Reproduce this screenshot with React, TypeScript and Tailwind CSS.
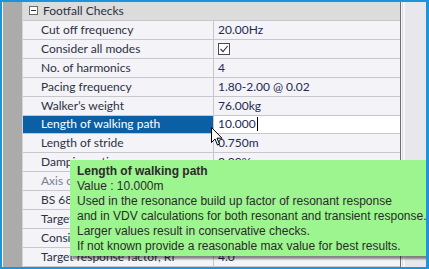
import React from "react";

type Row = {
  label: string;
  value?: string;
  check?: boolean;
  selected?: boolean;
  disabled?: boolean;
};

const rows: Row[] = [
  { label: "Cut off frequency", value: "20.00Hz" },
  { label: "Consider all modes", check: true },
  { label: "No. of harmonics", value: "4" },
  { label: "Pacing frequency", value: "1.80-2.00 @ 0.02" },
  { label: "Walker\u2019s weight", value: "76.00kg" },
  { label: "Length of walking path", value: "10.000", selected: true },
  { label: "Length of stride", value: "0.750m" },
  { label: "Damping ratio", value: "3.00%" },
  { label: "Axis of vibration", value: "Vertical", disabled: true },
  { label: "BS 6841 weighting", value: "Wg" },
  { label: "Target response factor", value: "8.0" },
  { label: "Consider transient response", value: "Yes" },
  { label: "Target response factor, Rf", value: "4.0" },
];

function CheckBox() {
  return (
    <span className="flex h-[12px] w-[12px] items-center justify-center border border-[#4a4a4a] bg-white">
      <svg width="10" height="10" viewBox="0 0 10 10">
        <path d="M1.5 5 L4 7.6 L8.6 2" fill="none" stroke="#333" strokeWidth="1.1" />
      </svg>
    </span>
  );
}

function PropRow({ row }: { row: Row }) {
  return (
    <div className="flex h-[19px] border-b border-[#c8c8cc] bg-[#f3f3f8]">
      <div
        className={
          row.selected
            ? "flex w-[190px] items-center whitespace-nowrap bg-[#0a5fa5] pl-[18px] text-white"
            : row.disabled
            ? "flex w-[190px] items-center whitespace-nowrap pl-[18px] text-[#7a7f92]"
            : "flex w-[190px] items-center whitespace-nowrap pl-[18px] text-[#2d3142]"
        }
      >
        {row.label}
      </div>
      <div
        className={
          row.selected
            ? "flex flex-1 items-center whitespace-nowrap border-l border-[#c8c8cc] bg-white pl-[4px] text-[#1f2a55]"
            : "flex flex-1 items-center whitespace-nowrap border-l border-[#c8c8cc] pl-[4px] text-[#1f2a55]"
        }
      >
        {row.check ? <CheckBox /> : row.value}
        {row.selected && <span className="ml-px h-[14px] w-px bg-black" />}
      </div>
    </div>
  );
}

export default function App() {
  return (
    <div
      className="relative flex h-[269px] w-[429px] overflow-hidden border-t-2 border-b-2 border-l-2 border-r-[3px] border-[#1a94da] bg-white text-[12px] leading-none"
      style={{ fontFamily: 'Lato, "Liberation Sans", sans-serif' }}
    >
      <div className="ml-px w-[19px] bg-[#ababab]" />
      <div className="w-px bg-[#d4d4d4]" />
      <div className="flex w-[377px] flex-col">
        <div className="flex h-[19px] items-center border-b border-[#c8c8cc] bg-[#dcdcdc] text-[#2d3142]">
          <span className="ml-[6px] mr-[4px] flex h-[9px] w-[9px] items-center justify-center border border-[#6a6a6a] bg-white">
            <span className="h-px w-[5px] bg-[#333]" />
          </span>
          <span className="ml-px">Footfall Checks</span>
        </div>
        {rows.map((r) => (
          <PropRow key={r.label} row={r} />
        ))}
      </div>
      <div className="w-px bg-[#6e6e6e]" />
      <div className="w-px bg-[#f4f4fa]" />
      <div className="w-px bg-[#dcdce6]" />
      <div className="w-[2px] bg-[#f4f4fa]" />
      <div className="flex-1 bg-[#e8e8ec]" />

      {/* tooltip */}
      <div
        className="absolute left-[68px] top-[158px] h-[96px] w-[360px] whitespace-nowrap bg-[#9cf58e] px-[7px] pt-[4px] text-[12px] leading-[15px] text-[#2b2b2b] shadow-[2px_3px_2px_rgba(0,0,0,0.45)]"
        style={{ fontFamily: '"Liberation Sans", Arial, sans-serif' }}
      >
        <div className="font-bold">Length of walking path</div>
        <div>Value : 10.000m</div>
        <div>Used in the resonance build up factor of resonant response</div>
        <div>and in VDV calculations for both resonant and transient response.</div>
        <div>Larger values result in conservative checks.</div>
        <div>If not known provide a reasonable max value for best results.</div>
      </div>

      {/* mouse pointer */}
      <svg className="absolute left-[209px] top-[125px]" width="12" height="19" viewBox="0 0 12 19">
        <path
          d="M0.5 0.5 L0.5 15.5 L4 12 L6.5 18 L8.5 17 L6 11.2 L11 11.2 Z"
          fill="white"
          stroke="black"
          strokeWidth="1"
          strokeLinejoin="miter"
        />
      </svg>
    </div>
  );
}
